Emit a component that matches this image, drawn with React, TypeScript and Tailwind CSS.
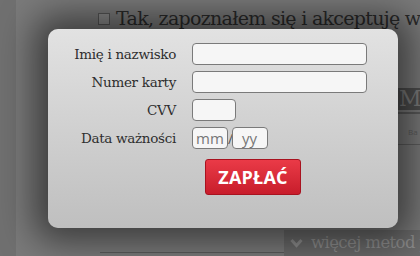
export default function App() {
  const serif = { fontFamily: '"DejaVu Serif", "Liberation Serif", serif' };
  const sans = { fontFamily: '"Open Sans", "Liberation Sans", sans-serif' };

  const rows = [
    { label: 'Imię i nazwisko', w: 'w-[175px]' },
    { label: 'Numer karty', w: 'w-[175px]' },
    { label: 'CVV', w: 'w-[44px]' },
  ];

  return (
    <div className="relative w-[420px] h-[256px] overflow-hidden bg-[#7a7a7a]">
      {/* dimmed page behind the dialog */}
      <div className="flex h-full">
        <div className="w-[16px] shrink-0 bg-[#707070]" />
        <div className="flex flex-1 flex-col min-w-0">
          <div className="flex items-center gap-[6px] pl-[82px] pt-[5px] h-[32px] whitespace-nowrap text-[#2a2a2a] text-[19px] tracking-[-0.7px]" style={serif}>
            <span className="inline-block w-[12px] h-[12px] shrink-0 border border-[#555] bg-[#8a8a8a]" />
            <span className="shrink-0">Tak, zapoznałem się i akceptuję w</span>
          </div>
          <div className="flex justify-end mt-[56px]">
            <div className="w-[23px] h-[22px] overflow-hidden bg-[#4e4e4e] text-[#7c7c7c] text-[22px] leading-[22px] pl-[2px]" style={serif}>M</div>
          </div>
          <div className="h-[2px] bg-[#5a5a5a] ml-auto w-[60px] mt-[2px]" />
          <div className="flex justify-end mt-[12px]">
            <div className="w-[12px] overflow-hidden text-[8px] text-[#5c5c5c] whitespace-nowrap" style={sans}>Ba</div>
          </div>
          <div className="h-px bg-[#5e5e5e] ml-auto w-[40px] mt-[6px]" />
          <div className="flex-1" />
          <div className="flex items-end">
            <div className="ml-[84px] w-[184px] h-px bg-[#5a5a5a] mb-[3px]" />
            <div className="flex items-center gap-[8px] h-[26px] flex-1 bg-[#6a6a6a] pl-[6px] text-[16.5px] tracking-[-0.6px] text-[#8e8e8e] whitespace-nowrap overflow-hidden" style={serif}>
              <svg width="13" height="10" viewBox="0 0 13 10" className="shrink-0"><path d="M1.5 2 L6.5 7.5 L11.5 2" stroke="#8e8e8e" strokeWidth="3" fill="none" /></svg>
              <span className="shrink-0">więcej metod p</span>
            </div>
          </div>
        </div>
      </div>

      {/* dialog */}
      <div className="absolute left-[48px] top-[29px] w-[350px] h-[199px] rounded-[10px] bg-gradient-to-b from-[#e2e2e2] to-[#bfbfbf] shadow-[0_0_34px_14px_rgba(0,0,0,0.5)] pt-[14px]">
        <div className="flex flex-col gap-[6px]">
          {rows.map((r) => (
            <div key={r.label} className="flex items-center">
              <label className="w-[128px] text-right text-[13.5px] text-[#2e2e2e] tracking-[-0.3px]" style={serif}>{r.label}</label>
              <div className={`ml-[16px] h-[22px] ${r.w} rounded-[4px] border border-[#7a7a7a] bg-[#f6f6f6]`} />
            </div>
          ))}
          <div className="flex items-center">
            <label className="w-[128px] text-right text-[13.5px] text-[#2e2e2e] tracking-[-0.3px]" style={serif}>Data ważności</label>
            <div className="ml-[16px] flex items-center">
              <div className="h-[22px] w-[36px] rounded-[4px] border border-[#7a7a7a] bg-[#f6f6f6] text-[15px] text-[#777] leading-[20px] pl-[3px]" style={sans}>mm</div>
              <span className="text-[14px] text-[#555] w-[4px] text-center" style={sans}>/</span>
              <div className="h-[22px] w-[36px] rounded-[4px] border border-[#7a7a7a] bg-[#f6f6f6] text-[15px] text-[#777] leading-[20px] pl-[9px]" style={sans}>yy</div>
            </div>
          </div>
        </div>
        <div className="flex mt-[10px] pl-[157px]">
          <button className="h-[36px] w-[96px] rounded-[3px] border border-[#a8121f] bg-gradient-to-b from-[#ea3a47] to-[#c81c2b] text-white text-[18px] font-bold tracking-[0.2px]" style={sans}>ZAPŁAĆ</button>
        </div>
      </div>
    </div>
  );
}
